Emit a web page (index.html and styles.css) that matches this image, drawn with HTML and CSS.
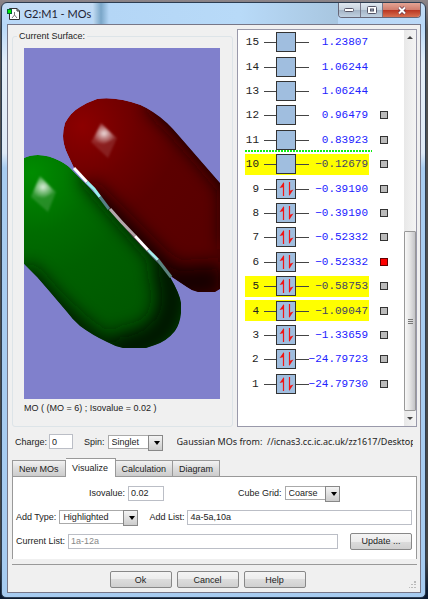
FILE: index.html
```
<!DOCTYPE html>
<html lang="en">
<head>
<meta charset="utf-8">
<title>G2:M1 - MOs</title>
<link rel="stylesheet" href="styles.css">
</head>
<body>
<svg class="defs" width="0" height="0">
	<symbol id="empty" viewBox="0 0 45 20">
		<path d="M0 10.5H45" stroke="#444"/>
		<rect x="12.5" y=".5" width="19" height="19" fill="#a0bedf" stroke="#333"/>
	</symbol>
	<symbol id="full" viewBox="0 0 45 20">
		<path d="M0 10.5H45" stroke="#444"/>
		<rect x="12.5" y=".5" width="19" height="19" fill="#a0bedf" stroke="#333"/>
		<path d="M19.5 17V4M25.500 3V16" stroke="#f01414" stroke-width="1.200"/>
		<path d="M20 3V8L15.500 9ZM25 17V12L29.500 10.500Z" fill="#f01414"/>
	</symbol>
</svg>
<div class="window">
	<div class="titlebar">
		<svg class="icon" width="14" height="14" viewBox="0 0 14 14">
			<path d="M2.500 1.500H10L12.500 4V12.500H2.500Z" fill="#fff" stroke="#333"/>
			<path d="M10 1.500V4H12.500" fill="none" stroke="#333"/>
			<path d="M7.500 5V8L5 11M7.500 8L10 11" fill="none" stroke="#777"/>
			<rect x=".5" y="2.500" width="4" height="4" fill="#0e0" stroke="#063"/>
		</svg>
		<h1>G2:M1 - MOs</h1>
		<div class="ghost"></div>
		<div class="winbtns">
			<button class="min" aria-label="Minimize"><svg width="11" height="5" viewBox="0 0 11 5"><rect x=".5" y=".5" width="9" height="3" rx="1" fill="#fff" stroke="#556"/></svg></button>
			<button class="max" aria-label="Maximize"><svg width="10" height="9" viewBox="0 0 10 9"><rect x=".5" y=".5" width="9" height="7" rx="1" fill="#fff" stroke="#556"/><rect x="3.500" y="3" width="3" height="2" fill="#9ab" stroke="#556"/></svg></button>
			<button class="close" aria-label="Close"><svg width="10" height="9" viewBox="0 0 10 9"><path d="M2 1.500L8 7.500M8 1.500L2 7.500" stroke="#634" stroke-width="3.500"/><path d="M2 1.500L8 7.500M8 1.500L2 7.500" stroke="#fff" stroke-width="2"/></svg></button>
		</div>
	</div>

	<div class="client">
		<div class="top">
			<fieldset class="surface">
				<legend>Current Surface:</legend>
				<svg class="view" viewBox="0 0 196 351" preserveAspectRatio="xMidYMid slice">
					<defs>
						<radialGradient id="red" gradientUnits="userSpaceOnUse" cx="58" cy="78" r="160">
							<stop offset="0" stop-color="#8c0000"/><stop offset=".35" stop-color="#6c0000"/><stop offset=".6" stop-color="#5c0000"/><stop offset="1" stop-color="#580000"/>
						</radialGradient>
						<radialGradient id="green" gradientUnits="userSpaceOnUse" cx="8" cy="125" r="170">
							<stop offset="0" stop-color="#008c00"/><stop offset=".35" stop-color="#006c00"/><stop offset=".6" stop-color="#006000"/><stop offset="1" stop-color="#005800"/>
						</radialGradient>
						<radialGradient id="shine"><stop offset="0" stop-color="#fff" stop-opacity=".85"/><stop offset=".4" stop-color="#fff" stop-opacity=".5"/><stop offset="1" stop-color="#fff" stop-opacity=".05"/></radialGradient>
						<filter id="soft" x="-50%" y="-50%" width="200%" height="200%"><feGaussianBlur stdDeviation="9"/></filter>
						<filter id="edge" x="-50%" y="-50%" width="200%" height="200%"><feGaussianBlur stdDeviation="1"/></filter>
						<path id="redLobe" d="M50 120L43 105Q39 96 39 88Q39 82 41 75Q47 64 56 59Q64 54 73 51Q84 49 99 52Q116 55 129 64Q143 73 156 89L176 112L196 135V241L191 244H174Q168 243 163 239L148 229L109 189Z"/>
						<path id="greenLobe" d="M0 110Q6 107 14 107Q25 107 36 113Q44 117 49 123L66 140L86 162L109 189L131 212Q141 221 146 229Q156 246 157 255V265Q156 276 151 283Q143 293 131 297Q125 299 122 300H99Q90 298 83 294Q68 287 56 278Q48 271 43 264L26 244L13 229L0 216Z"/>
						<clipPath id="redClip"><use href="#redLobe"/></clipPath>
						<clipPath id="greenClip"><use href="#greenLobe"/></clipPath>
					</defs>
					<rect x="-300" width="800" height="351" fill="#8080cc"/>
					<g clip-path="url(#redClip)">
						<use href="#redLobe" fill="url(#red)"/>
						<g filter="url(#soft)" fill="none" stroke="#160000">
							<path d="M128 52Q150 68 208 138V200" stroke-width="19"/>
							<path d="M62 142L145 225" stroke-width="20"/>
							<path d="M140 236L200 232" stroke-width="34"/>
						</g>
						<g filter="url(#edge)"><path d="M77 75L93 90L84 110L67 94Z" fill="#fff" fill-opacity=".12"/><path d="M77 75L92 90L80 96L68 94Z" fill="url(#shine)"/></g>
					</g>
					<g clip-path="url(#greenClip)">
						<use href="#greenLobe" fill="url(#green)"/>
						<g filter="url(#soft)" fill="none" stroke="#001400">
							<path d="M62 124L148 222" stroke-width="16"/>
							<path d="M140 215Q158 250 140 280Q122 300 90 300" stroke-width="32"/>
							<path d="M93 304Q60 292 0 222" stroke-width="17"/>
						</g>
						<g filter="url(#edge)"><path d="M16 128L32 144L24 164L7 149Z" fill="#fff" fill-opacity=".15"/><path d="M16 128L31 144L20 150L7 148Z" fill="url(#shine)"/></g>
					</g>
					<g fill="none" stroke-width="3">
						<path d="M50 120L63 134" stroke="#fff"/><path d="M63 134Q70 140 76 149" stroke="#9ee"/><path d="M76 149L85 161" stroke="#588088"/>
						<path d="M86 161Q97 174 111 188" stroke="#b4a8ac"/><path d="M111 188L124 202" stroke="#fff"/><path d="M124 202L134 212" stroke="#a6eeee"/><path d="M134 212L147 229" stroke="#5c8480"/>
					</g>
				</svg>
				<p>MO ( (MO = 6) ; Isovalue = 0.02 )</p>
			</fieldset>

			<div class="levels">
				<ul>
					<li><label><b>15</b><svg><use href="#empty"/></svg><span>1.23807</span></label></li>
					<li><label><b>14</b><svg><use href="#empty"/></svg><span>1.06244</span></label></li>
					<li><label><b>13</b><svg><use href="#empty"/></svg><span>1.06244</span></label></li>
					<li><label for="mo12"><b>12</b><svg><use href="#empty"/></svg><span>0.96479</span></label><input type="checkbox" id="mo12"></li>
					<li class="gap"><label for="mo11"><b>11</b><svg><use href="#empty"/></svg><span>0.83923</span></label><input type="checkbox" id="mo11"></li>
					<li class="on"><label for="mo10"><b>10</b><svg><use href="#empty"/></svg><span>−0.12679</span></label><input type="checkbox" id="mo10"></li>
					<li><label for="mo9"><b>9</b><svg><use href="#full"/></svg><span>−0.39190</span></label><input type="checkbox" id="mo9"></li>
					<li><label for="mo8"><b>8</b><svg><use href="#full"/></svg><span>−0.39190</span></label><input type="checkbox" id="mo8"></li>
					<li><label for="mo7"><b>7</b><svg><use href="#full"/></svg><span>−0.52332</span></label><input type="checkbox" id="mo7"></li>
					<li><label for="mo6"><b>6</b><svg><use href="#full"/></svg><span>−0.52332</span></label><input type="checkbox" id="mo6" checked></li>
					<li class="on"><label for="mo5"><b>5</b><svg><use href="#full"/></svg><span>−0.58753</span></label><input type="checkbox" id="mo5"></li>
					<li class="on"><label for="mo4"><b>4</b><svg><use href="#full"/></svg><span>−1.09047</span></label><input type="checkbox" id="mo4"></li>
					<li><label for="mo3"><b>3</b><svg><use href="#full"/></svg><span>−1.33659</span></label><input type="checkbox" id="mo3"></li>
					<li><label for="mo2"><b>2</b><svg><use href="#full"/></svg><span>−24.79723</span></label><input type="checkbox" id="mo2"></li>
					<li><label for="mo1"><b>1</b><svg><use href="#full"/></svg><span>−24.79730</span></label><input type="checkbox" id="mo1"></li>
				</ul>
				<div class="scroll">
					<svg width="12" height="15" viewBox="0 0 12 15"><path d="M3 9L6 6L9 9Z" fill="#444"/></svg>
					<div class="thumb"><i></i><i></i><i></i></div>
					<svg width="12" height="15" viewBox="0 0 12 15"><path d="M3 6L6 9L9 6Z" fill="#444"/></svg>
				</div>
			</div>
		</div>

		<div class="state">
			<label for="charge">Charge:</label>
			<input type="text" id="charge" class="charge" value="0">
			<label for="spin">Spin:</label>
			<span class="pick"><select id="spin"><option>Singlet</option></select></span>
			<span class="from">Gaussian MOs from:&nbsp; //icnas3.cc.ic.ac.uk/zz1617/Desktop</span>
		</div>

		<div class="tabs">
			<button>New MOs</button>
			<button class="cur">Visualize</button>
			<button>Calculation</button>
			<button>Diagram</button>
		</div>
		<div class="panel">
			<div class="row iso">
				<label for="iso">Isovalue:</label>
				<input type="text" id="iso" value="0.02">
				<label for="grid" class="grid">Cube Grid:</label>
				<span class="pick"><select id="grid"><option>Coarse</option></select></span>
			</div>
			<div class="row">
				<label for="type">Add Type:</label>
				<span class="pick wide"><select id="type"><option>Highlighted</option></select></span>
				<label for="add" class="add">Add List:</label>
				<input type="text" id="add" class="fill" value="4a-5a,10a">
			</div>
			<div class="row">
				<label for="list">Current List:</label>
				<input type="text" id="list" class="fill" value="1a-12a" disabled>
				<button class="btn update">Update ...</button>
			</div>
		</div>

		<div class="footer">
			<button class="btn">Ok</button>
			<button class="btn">Cancel</button>
			<button class="btn">Help</button>
			<svg class="grip" width="7" height="7" viewBox="0 0 7 7"><path d="M5 0h2v2h-2zM5 3h2v1h-2zM5 6h2v1h-2zM2 3h2v1h-2zM2 6h2v1h-2zM0 6h1v1h-1z" fill="#bbb"/></svg>
		</div>
	</div>
</div>
</body>
</html>
```
FILE: styles.css
```
*{margin:0;padding:0;box-sizing:border-box;}
body{min-height:100vh;padding:2px 2px 3px 1px;display:flex;background:linear-gradient(#8c8488,#555 30px,#444 560px,#0b1a30 590px);font:9px/12px "Liberation Sans",Arial,sans-serif;color:#222;}
button,input,select{font:inherit;color:inherit;border-radius:0;}
svg{display:block;flex:none;}
.defs{position:absolute;}

.window{flex:1;min-width:0;display:flex;flex-direction:column;padding:0 4px 4px 5px;border:1px solid #2c3c50;border-radius:6px 6px 5px 5px;background:linear-gradient(#c4dcf4,#b8d8f8 22px,#e4eef8 60px,#dfeaf6 150px,#a8ccf0 165px,#a6cbf0);}
.titlebar{height:21px;display:flex;align-items:center;}
.titlebar h1{margin-left:3px;font:11px/14px Lato,"Open Sans",sans-serif;color:#223;}
.ghost{flex:1;align-self:stretch;margin-left:2px;background:linear-gradient(90deg,#c0daf2,#7aa6c8 8px,#b4d6f6 16px,#b8daf8 60%,#a8c6e0);}
.winbtns{display:flex;align-self:flex-start;border:1px solid #667;border-top:0;border-radius:0 0 4px 4px;overflow:hidden;}
.winbtns button{width:22px;height:14px;display:flex;align-items:center;justify-content:center;border:0;border-right:1px solid #778;background:linear-gradient(#e0e8f0,#c4d0dc 50%,#a4b4c6 50%,#c0d0e0);}
.winbtns .close{width:37px;border:0;background:linear-gradient(#e4a494,#d07c6c 50%,#b83420 50%,#d87050);}

.client{flex:1;display:flex;flex-direction:column;border:1px solid #778;padding:4px 3px 4px 4px;background:#f0f0f0;}
.top{display:flex;align-items:flex-start;gap:4px;}
.surface{flex:1;min-width:0;margin-top:1px;padding:6px 12px 12px 11px;border:1px solid #dde4e8;border-radius:3px;}
.surface legend{margin-left:-7px;padding:0 2px;height:12px;}
.view{width:100%;height:351px;}
.surface p{margin-top:3px;}

.levels{width:180px;height:398px;display:flex;border:1px solid #99a;background:#fff;}
.levels ul{flex:1;height:366px;padding-left:7px;display:grid;grid-template-rows:repeat(15,1fr);list-style:none;}
.levels li{display:flex;align-items:center;gap:11px;font:11px/20px "Liberation Mono","Courier New",monospace;}
.levels label{width:124px;height:21px;padding-right:1px;display:flex;align-items:center;}
.levels b{width:14px;margin-right:5px;text-align:right;font-weight:normal;}
.levels label svg{width:45px;height:20px;}
.levels span{flex:1;display:flex;justify-content:flex-end;color:#22f;}
.levels .on label{background:#ff0;}
.levels .on span{color:#446;}
.levels .gap{background:repeating-linear-gradient(90deg,#1e1 0 2px,#fff 2px 3px) left bottom/127px 2px no-repeat;}
.levels input{appearance:none;width:8px;height:8px;border:1px solid #333;background:#bbb;}
.levels input:checked{background:#f00;border-color:#600;}
.scroll{width:12px;display:flex;flex-direction:column;background:linear-gradient(90deg,#e8e8e8,#f4f4f4);}
.thumb{height:180px;margin-top:auto;display:flex;flex-direction:column;align-items:center;justify-content:center;gap:1px;border:1px solid #999;border-radius:1px;background:linear-gradient(90deg,#f8f8f8,#e4e4e4 50%,#c4c4c8);}
.thumb i{width:5px;height:1px;background:#777;}

input[type=text]{height:15px;padding:0 2px;border:1px solid #bbbec6;background:#fff;min-width:0;}
input:disabled{color:#888;}
.pick{position:relative;width:55px;height:14px;}
.pick.wide{width:79px;}
.pick select{appearance:none;display:block;width:100%;height:14px;padding:0 13px 0 3px;border:1px solid #aaa;background:#fff;}
/* drop-down button */
.pick::before{content:"";position:absolute;right:0;top:0;width:13px;height:14px;border:1px solid #888;background:linear-gradient(#f4f4f4,#ccc);pointer-events:none;}
.pick::after{content:"";position:absolute;right:3px;top:6px;border:3px solid transparent;border-top:4px solid #000;border-bottom:0;pointer-events:none;}

.state{display:flex;align-items:center;height:15px;margin-top:7px;padding:0 4px 0 3px;}
.state .charge{width:24px;margin:0 11px 0 2px;}
.state .pick{margin:0 14px 0 3px;flex:none;}
.from{flex:1;min-width:0;overflow:hidden;white-space:nowrap;font:9px/15px "Noto Sans","Open Sans",sans-serif;}

.tabs{display:flex;align-items:flex-end;margin-top:8px;height:19px;}
.tabs button{height:16px;padding:0 6px;border:1px solid #999;border-width:1px 1px 0 0;background:linear-gradient(#f2f2f2,#ddd 50%,#ccc);}
.tabs button:first-child{border-left-width:1px;}
.tabs .cur{position:relative;width:50px;height:19px;margin-bottom:-1px;background:#fff;}
.panel{padding:8px 4px 10px 3px;display:flex;flex-direction:column;gap:8px;border:1px solid #999;border-bottom:0;background:#fff;}
.row{display:flex;align-items:center;height:16px;gap:3px;}
.iso{padding-left:73px;}
.iso input{width:36px;}
.grid{margin-left:71px;}
.add{margin-left:8px;}
.fill{flex:1;}
.btn{width:62px;height:17px;border:1px solid #888;border-radius:2px;background:linear-gradient(#f4f4f4,#ececec 50%,#dcdcdc 50%,#d0d0d0);}
.update{margin-left:9px;}

.footer{position:relative;display:flex;justify-content:center;gap:5px;margin-top:5px;padding:6px 14px 0 0;border-top:1px solid #999;}
.grip{position:absolute;right:1px;bottom:0;}
```
